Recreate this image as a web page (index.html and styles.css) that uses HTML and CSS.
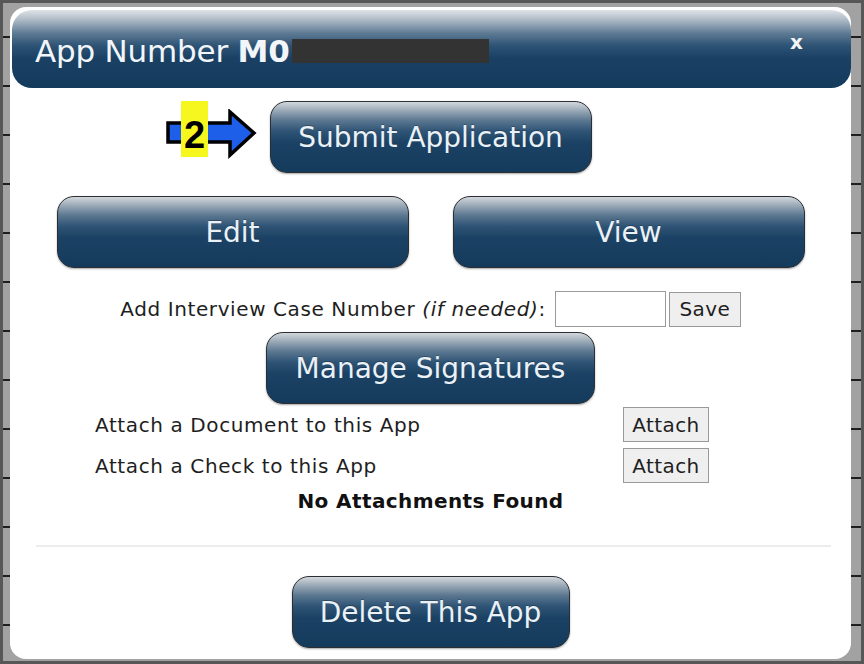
FILE: index.html
```html
<!DOCTYPE html>
<html>
<head>
<meta charset="utf-8">
<title>App Number</title>
<link rel="stylesheet" href="styles.css">
</head>
<body>
<div class="backdrop">
  <div class="dialog">
    <div class="header">
      <span class="title">App Number <b>M0</b></span><span class="redact"></span>
      <span class="close">x</span>
    </div>
    <div class="row submit-row">
      <div class="annotation">
        <svg class="arrow" width="96" height="52" viewBox="0 0 96 52">
          <polygon points="4,14 66,14 66,3 90,24 66,46 66,33 4,33" fill="#1d5fe8" stroke="#000" stroke-width="3.5" stroke-linejoin="miter"/>
        </svg>
        <span class="step">2</span>
      </div>
      <button class="btn btn-submit">Submit Application</button>
    </div>
    <div class="row pair-row">
      <button class="btn btn-wide">Edit</button>
      <button class="btn btn-wide">View</button>
    </div>
    <div class="case-row">
      <span>Add Interview Case Number <i>(if needed)</i>:</span>
      <input class="case-input" type="text">
      <button class="plain-btn save">Save</button>
    </div>
    <div class="row">
      <button class="btn btn-sign">Manage Signatures</button>
    </div>
    <div class="attach-grid">
      <span class="attach-label">Attach a Document to this App</span>
      <button class="plain-btn attach">Attach</button>
      <span class="attach-label">Attach a Check to this App</span>
      <button class="plain-btn attach">Attach</button>
    </div>
    <div class="none-found">No Attachments Found</div>
    <hr class="divider">
    <div class="row">
      <button class="btn btn-delete">Delete This App</button>
    </div>
  </div>
</div>
</body>
</html>
```
FILE: styles.css
```css
* { box-sizing: border-box; }
html, body { margin: 0; padding: 0; }
body {
  width: 864px;
  height: 664px;
  background: #575757;
  padding: 3px;
  font-family: "DejaVu Sans", Verdana, sans-serif;
  overflow: hidden;
}
.backdrop {
  width: 858px;
  height: 658px;
  padding: 4px 10px 2px 7px;
  background-color: #a2a2a2;
  background-image: repeating-linear-gradient(to bottom, transparent 0 47px, #1e1e1e 47px 49px);
  background-position: 0 -14px;
}
.dialog {
  width: 841px;
  height: 652px;
  background: #fff;
  border-radius: 16px;
  padding: 3px 0 0 2px;
  position: relative;
}
.header {
  height: 78px;
  border-radius: 20px;
  background: linear-gradient(to bottom, #dfe3e7 0%, #a7b5c2 14%, #5d7a94 30%, #2c5274 46%, #1a4164 62%, #143a5c 100%);
  display: flex;
  align-items: center;
  padding-left: 23px;
  padding-top: 4px;
  position: relative;
  color: #f2f6fa;
}
.title {
  font-size: 31px;
  white-space: pre;
  letter-spacing: -0.2px;
  width: 257px;
  overflow: hidden;
}
.title b { font-weight: bold; }
.redact {
  display: inline-block;
  width: 197px;
  height: 24px;
  background: #333;
}
.close {
  position: absolute;
  right: 48px;
  top: 20px;
  font-size: 20px;
  font-weight: bold;
  color: #f4f4f4;
}
.row {
  display: flex;
  justify-content: center;
  padding-right: 2px;
}
.submit-row {
  margin-top: 13px;
  position: relative;
}
.annotation {
  position: absolute;
  left: 152px;
  top: 0;
  width: 100px;
  height: 58px;
}
.arrow {
  position: absolute;
  left: 0;
  top: 8px;
}
.step {
  position: absolute;
  left: 17px;
  top: 0;
  width: 27px;
  height: 56px;
  background: #f7f720;
  font-family: "Liberation Sans", Arial, sans-serif;
  font-weight: bold;
  font-size: 38px;
  line-height: 68px;
  text-align: center;
  color: #000;
}
.btn {
  height: 72px;
  border-radius: 17px;
  border: 1px solid #2b2f33;
  background: linear-gradient(to bottom, #d3d8dc 0%, #a4b1bd 10%, #5c7891 26%, #2e5375 42%, #1b4264 58%, #143a5c 100%);
  color: #eaf1f7;
  font-family: "DejaVu Sans", Verdana, sans-serif;
  font-size: 28px;
  padding: 0;
  box-shadow: 0 1px 2px rgba(0,0,0,0.35);
  text-shadow: 0 -1px 0 rgba(0,0,0,0.25);
}
.btn-submit { width: 322px; }
.pair-row { margin-top: 23px; gap: 44px; }
.btn-wide { width: 352px; }
.btn-sign { width: 329px; }
.btn-delete { width: 278px; }
.case-row {
  margin-top: 23px;
  display: flex;
  justify-content: center;
  align-items: center;
  font-size: 20px;
  letter-spacing: 0.6px;
  color: #1e1e1e;
  padding-right: 2px;
}
.case-row i { font-style: italic; }
.case-input {
  width: 111px;
  height: 36px;
  margin-left: 9px;
  border: 1px solid #9a9a9a;
  background: #fff;
}
.plain-btn {
  background: #efefef;
  border: 1px solid #999;
  font-family: "DejaVu Sans", Verdana, sans-serif;
  font-size: 20px;
  letter-spacing: 0.4px;
  color: #1e1e1e;
  padding: 0;
  border-radius: 0;
}
.save { width: 72px; height: 35px; margin-left: 3px; }
.case-row + .row { margin-top: 5px; }
.attach-grid {
  display: grid;
  grid-template-columns: 528px 86px;
  row-gap: 6px;
  margin: 3px 0 0 83px;
  align-items: center;
}
.attach-label {
  font-size: 20px;
  letter-spacing: 0.6px;
  color: #1e1e1e;
}
.attach { width: 86px; height: 35px; }
.none-found {
  text-align: center;
  font-weight: bold;
  font-size: 20px;
  letter-spacing: 0.4px;
  color: #111;
  margin-top: 6px;
  padding-right: 2px;
}
.divider {
  border: 0;
  height: 2px;
  background: #ececec;
  margin: 32px 20px 0 24px;
}
.divider + .row { margin-top: 29px; }
```
